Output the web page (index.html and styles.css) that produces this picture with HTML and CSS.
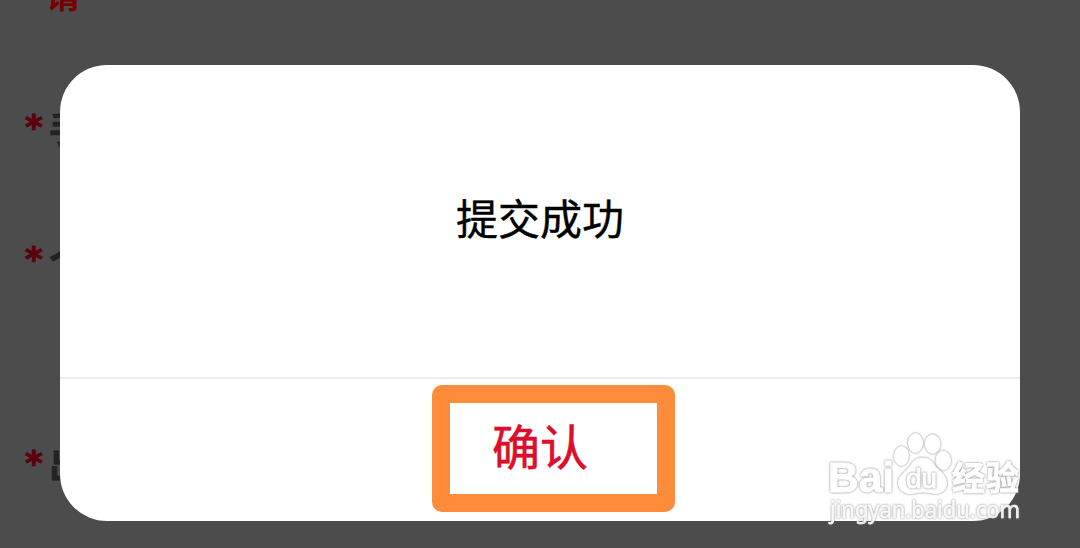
FILE: index.html
```
<!DOCTYPE html>
<html lang="zh-CN">
<head>
  <meta charset="UTF-8" />
  <meta name="viewport" content="width=device-width, initial-scale=1.0"/>
  <title>提交成功</title>
  <link rel="stylesheet" href="styles.css">
</head>
<body>
  <!-- 弹窗后面的表单 -->
  <form class="formulario">
    <p class="aviso">请</p>
    <div class="campo"><span class="obrigatorio">*</span><span class="rotulo">手</span></div>
    <div class="campo campo-medio"><span class="obrigatorio">*</span><span class="rotulo">个</span></div>
    <div class="campo"><span class="obrigatorio">*</span><span class="rotulo">出</span></div>
  </form>

  <!-- 弹窗 -->
  <div class="overlay">
    <div class="dialog">
      <div class="mensagem">提交成功</div>
      <div class="acoes">
        <button class="btn-confirmar">确认</button>
      </div>
    </div>
  </div>

  <div class="destaque"></div>

  <!-- 水印 -->
  <svg class="marca" width="210" height="108" viewBox="820 425 210 108">
    <g class="marca-logo">
      <text x="828" y="492" font-size="43" textLength="66" lengthAdjust="spacingAndGlyphs">Bai</text>
      <ellipse cx="901.500" cy="456" rx="7" ry="9.500"/>
      <ellipse cx="915.500" cy="443" rx="7" ry="9.500"/>
      <ellipse cx="932.700" cy="444" rx="7.300" ry="9.300"/>
      <ellipse cx="943.300" cy="460.500" rx="7.300" ry="9.300"/>
      <path d="M922 458C928 458 931 460 934 465C937 470 946 473 946.500 483C947 490 941 494 935 493.500C930 493 928 492 922.500 492C917 492 914 494 909 493.500C902 493 898 488 898.500 482C899 475 907 471 911 465C914 460 917 458 922 458Z"/>
      <text class="marca-du" x="906" y="488" font-size="27" textLength="31" lengthAdjust="spacingAndGlyphs">du</text>
      <text class="marca-cjk" x="952" y="490" font-size="33" textLength="67">经验</text>
    </g>
    <text class="marca-url" x="830" y="518" font-size="23" textLength="190" lengthAdjust="spacingAndGlyphs">jingyan.baidu.com</text>
  </svg>
</body>
</html>
```

FILE: styles.css
```
body {
  margin: 0;
  height: 548px;
  overflow: hidden;
  position: relative;
  background-color: #4c4c4c;
  font-family: "Noto Sans CJK SC", sans-serif;
}

/* 表单 */
.formulario {
  padding-left: 25px;
  color: #222;
  font-size: 36px;
  font-weight: bold;
  line-height: 40px;
}

.aviso {
  margin: -26px 0 90px 21px;
  height: 40px;
  color: #780000;
  font-size: 34px;
}

.campo {
  display: flex;
  height: 40px;
  margin-bottom: 92px;
}

.campo-medio {
  margin-bottom: 164px;
}

.obrigatorio {
  width: 24px;
  color: #5c000d;
  font-family: "DejaVu Sans", sans-serif;
  font-size: 34px;
  line-height: 47px;
  -webkit-text-stroke: 1px #5c000d;
}

.rotulo {
  padding-top: 3px;
  -webkit-text-stroke: 0.5px #222;
}

/* 弹窗 */
.overlay {
  position: absolute;
  inset: 0;
  padding: 65px 60px 27px;
}

.dialog {
  height: 456px;
  display: flex;
  flex-direction: column;
  border-radius: 47px;
  background-color: #fff;
  overflow: hidden;
}

.mensagem {
  height: 314px;
  display: flex;
  align-items: center;
  justify-content: center;
  box-sizing: border-box;
  padding-bottom: 10px;
  border-bottom: 2px solid #ebeeef;
  color: #000;
  font-size: 42px;
  -webkit-text-stroke: 0.4px #000;
}

.acoes {
  flex: 1;
  display: flex;
}

.btn-confirmar {
  flex: 1;
  padding: 0 0 12px;
  border: none;
  background: none;
  color: #dc0e2b;
  font-family: inherit;
  font-size: 48px;
  -webkit-text-stroke: 0.6px #dc0e2b;
  cursor: pointer;
}

/* 按钮外的橙色框 */
.destaque {
  position: absolute;
  left: 432px;
  top: 385px;
  width: 207px;
  height: 91px;
  border: 18px solid #ff8c3a;
  border-radius: 10px;
  pointer-events: none;
}

/* 水印 */
.marca {
  position: absolute;
  left: 820px;
  top: 425px;
  pointer-events: none;
}

.marca-logo {
  fill: #fff;
  stroke: #fff;
  stroke-width: 1px;
  font-family: "Liberation Sans", sans-serif;
  font-weight: bold;
}

.marca-logo > *,
.marca-url {
  filter: drop-shadow(0 0 0.8px #808080);
}

.marca-du {
  font-weight: normal;
}

.marca-cjk {
  font-family: "Noto Sans CJK SC", sans-serif;
}

.marca-url {
  fill: #fff;
  fill-opacity: 0.9;
  stroke: #fff;
  stroke-width: 0.5px;
  font-family: "Noto Sans", sans-serif;
}
```
